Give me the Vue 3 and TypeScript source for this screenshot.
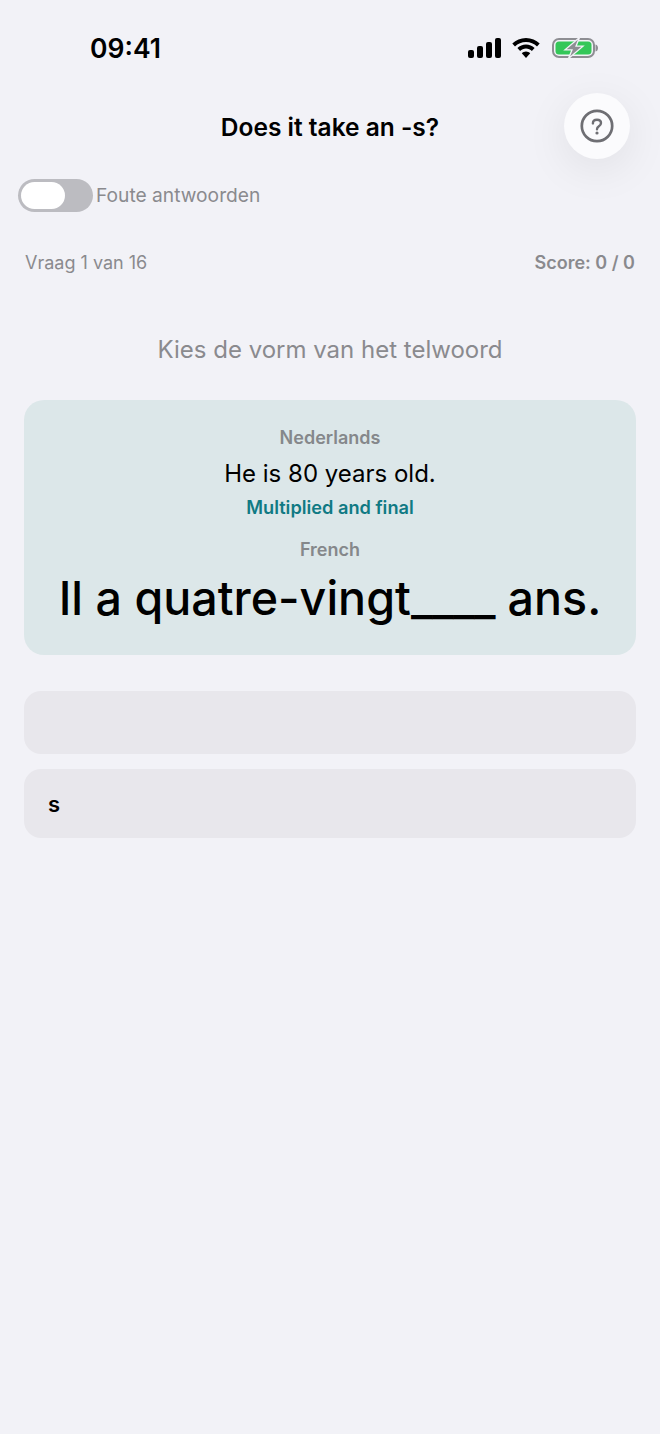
<template>
  <div class="screen">
    <header class="status-bar">
      <span class="time">09:41</span>
      <div class="status-icons">
        <svg class="signal" width="33" height="20" viewBox="0 0 33 20">
          <rect x="0" y="12" width="6" height="8" rx="2" fill="#000" />
          <rect x="9" y="8" width="6" height="12" rx="2" fill="#000" />
          <rect x="18" y="4" width="6" height="16" rx="2" fill="#000" />
          <rect x="27" y="0" width="6" height="20" rx="2" fill="#000" />
        </svg>
        <svg class="wifi" width="28" height="20" viewBox="0 0 28 20">
          <path d="M14 0C8.600 0 3.900 2.100 0.300 5.500L3 8.500C5.900 5.800 9.700 4.100 14 4.100S22.100 5.800 25 8.500L27.700 5.500C24.100 2.100 19.400 0 14 0Z" fill="#000" />
          <path d="M14 6.500C10.700 6.500 7.700 7.800 5.400 10L8.100 13C9.600 11.600 11.700 10.600 14 10.600S18.400 11.600 19.900 13L22.600 10C20.300 7.800 17.300 6.500 14 6.500Z" fill="#000" />
          <path d="M14 20L9.800 15.300C10.900 14.200 12.400 13.500 14 13.500S17.100 14.200 18.200 15.300Z" fill="#000" />
        </svg>
        <svg class="battery" width="47" height="22" viewBox="0 0 47 22">
          <rect x="1" y="2" width="41" height="18" rx="6" fill="none" stroke="#8e8e93" stroke-width="2" />
          <rect x="3.500" y="4.500" width="36" height="13" rx="3.500" fill="#34c759" />
          <path d="M43.500 7.500C45.500 8 46 9.500 46 11S45.500 14 43.500 14.500Z" fill="#8e8e93" />
          <path d="M27.500 0.500L13 12.800H20L16.500 21.500L31 9.200H24Z" fill="#8e8e93" stroke="#f2f2f7" stroke-width="1.300" />
        </svg>
      </div>
    </header>

    <h1 class="title">Does it take an -s?</h1>
    <button class="help-button" type="button" aria-label="Help">
      <svg width="34" height="34" viewBox="0 0 34 34">
        <circle cx="17" cy="17" r="15.200" fill="none" stroke="#6e6e73" stroke-width="2.700" />
        <path d="M12.900 14.400C12.900 12 14.700 10.800 17 10.800C19.400 10.800 21 12.200 21 14.100C21 15.500 20.300 16.400 18.900 17.300C17.700 18.100 17 18.800 17 20.300" fill="none" stroke="#6e6e73" stroke-width="2.400" stroke-linecap="round" />
        <circle cx="17" cy="24" r="1.600" fill="#6e6e73" />
      </svg>
    </button>

    <div class="toggle-row">
      <div class="toggle"><span class="knob"></span></div>
      <span class="toggle-label">Foute antwoorden</span>
    </div>

    <div class="progress-row">
      <span>Vraag {{ current }} van {{ total }}</span>
      <span class="score">Score: {{ score }} / {{ answered }}</span>
    </div>

    <p class="prompt">Kies de vorm van het telwoord</p>

    <section class="card">
      <div class="lang">Nederlands</div>
      <div class="source">He is 80 years old.</div>
      <div class="hint">Multiplied and final</div>
      <div class="lang lang-second">French</div>
      <div class="target">Il a quatre-vingt<span class="blank">____</span> ans.</div>
    </section>

    <div class="options">
      <button
        v-for="option in options"
        :key="option"
        class="option"
        :class="{ empty: !option }"
        type="button"
      >
        {{ option }}
      </button>
    </div>
  </div>
</template>

<script setup lang="ts">
const current = 1;
const total = 16;
const score = 0;
const answered = 0;
const options: string[] = ["", "s"];
</script>

<style>
html,
body {
  margin: 0;
  background: #f2f2f7;
}
</style>

<style scoped>
.screen {
  position: relative;
  width: 660px;
  height: 1434px;
  overflow: hidden;
  background: #f2f2f7;
  color: #000;
  font-family: Inter, "Liberation Sans", sans-serif;
}
.status-bar {
  display: flex;
  justify-content: space-between;
  align-items: center;
  height: 96px;
  box-sizing: border-box;
  padding: 0 61px 0 90px;
}
.time {
  font-size: 26.500px;
  font-weight: 600;
}
.status-icons {
  display: flex;
  align-items: center;
}
.wifi {
  margin-left: 11px;
}
.battery {
  margin-left: 12px;
}
.title {
  margin: 16px 0 0;
  text-align: center;
  font-size: 24.500px;
  line-height: 30px;
  font-weight: 600;
}
.help-button {
  position: absolute;
  top: 93px;
  left: 564px;
  width: 66px;
  height: 66px;
  padding: 0;
  border: none;
  border-radius: 50%;
  display: flex;
  align-items: center;
  justify-content: center;
  background: #fbfbfd;
  box-shadow: 0 10px 44px rgba(0, 0, 0, 0.08);
}
.toggle-row {
  display: flex;
  align-items: center;
  gap: 3px;
  margin: 37px 0 0 18px;
}
.toggle {
  width: 75px;
  height: 33px;
  box-sizing: border-box;
  padding: 3px;
  border-radius: 17px;
  background: #bcbcc1;
}
.knob {
  display: block;
  width: 44px;
  height: 27px;
  border-radius: 14px;
  background: #fff;
}
.toggle-label {
  padding-bottom: 2px;
  font-size: 19.200px;
  color: #8a8a8e;
}
.progress-row {
  display: flex;
  justify-content: space-between;
  margin: 40px 25px 0;
  font-size: 18px;
  line-height: 22px;
  color: #8a8a8e;
}
.score {
  font-weight: 600;
}
.prompt {
  margin: 61px 0 0;
  text-align: center;
  font-size: 24px;
  line-height: 30px;
  color: #8a8a8e;
}
.card {
  margin: 35px 24px 0;
  height: 255px;
  box-sizing: border-box;
  padding-top: 27px;
  border-radius: 20px;
  background: #dce7e9;
  text-align: center;
}
.lang {
  font-size: 18px;
  line-height: 22px;
  font-weight: 600;
  color: #85888b;
}
.lang-second {
  margin-top: 20px;
}
.source {
  margin-top: 10px;
  font-size: 24px;
  line-height: 30px;
}
.hint {
  margin-top: 6px;
  font-size: 18.200px;
  line-height: 24px;
  font-weight: 600;
  color: #107a84;
}
.target {
  margin-top: 7px;
  font-size: 46.600px;
  line-height: 60px;
  font-weight: 500;
}
.blank {
  letter-spacing: -0.500px;
}
.options {
  display: flex;
  flex-direction: column;
  gap: 15px;
  margin: 36px 24px 0;
}
.option {
  height: 69px;
  padding: 0 24px;
  border: none;
  border-radius: 17px;
  background: #e8e7ec;
  color: #000;
  font-family: inherit;
  font-size: 22px;
  font-weight: 600;
  text-align: left;
}
.option.empty {
  height: 63px;
}
</style>
